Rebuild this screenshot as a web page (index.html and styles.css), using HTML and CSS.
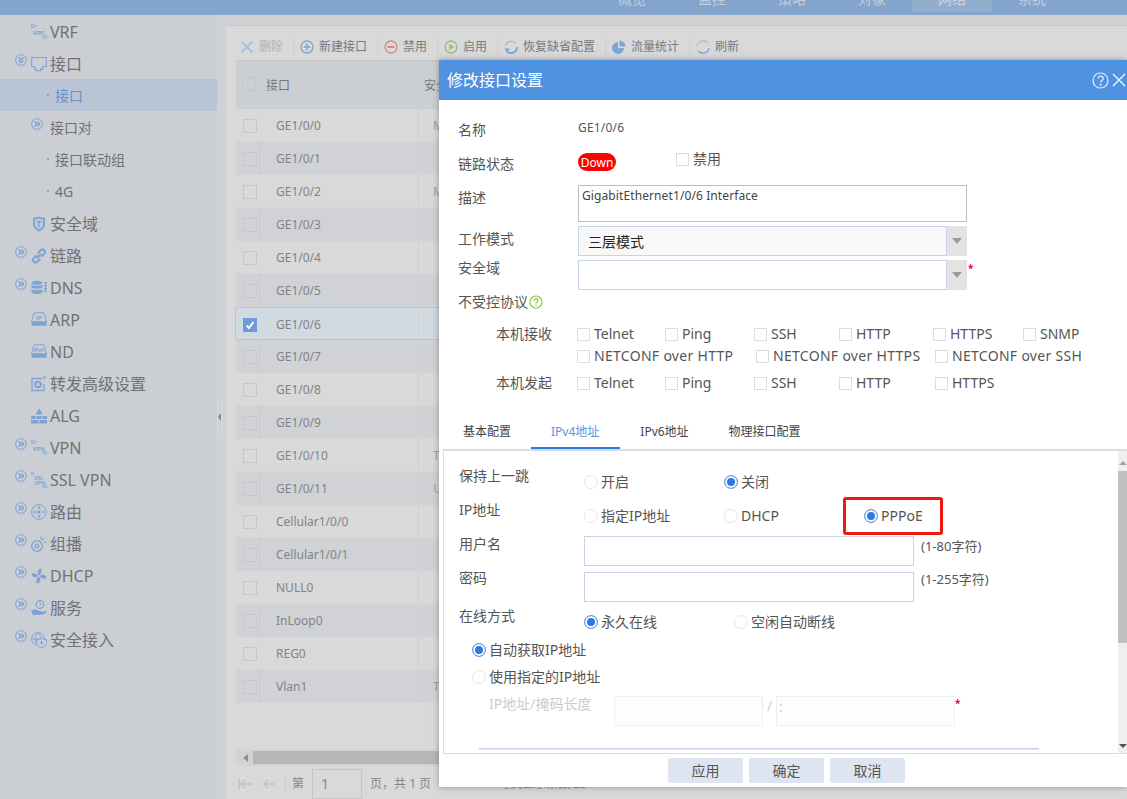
FILE: index.html
```html
<!DOCTYPE html>
<html lang="zh">
<head>
<meta charset="utf-8">
<title>修改接口设置</title>
<link rel="stylesheet" href="styles.css">
</head>
<body>
<svg class="defs" width="0" height="0">
  <symbol id="exp" viewBox="0 0 13 13"><circle cx="6.5" cy="6.5" r="5.8" fill="none" stroke="#82a7d8" stroke-width="1.1"/><path d="M3.800 4l2.500 2.500L3.800 9M6.800 4l2.500 2.500L6.800 9" fill="none" stroke="#6f98cf" stroke-width="1.200"/></symbol>
  <symbol id="col" viewBox="0 0 13 13"><circle cx="6.5" cy="6.5" r="5.8" fill="none" stroke="#82a7d8" stroke-width="1.1"/><path d="M4 3.800l2.500 2.500L9 3.800M4 6.800l2.500 2.500L9 6.800" fill="none" stroke="#6f98cf" stroke-width="1.200"/></symbol>
</svg>

<header class="top">
  <nav class="topnav">
    <div class="topitem"><span>概览</span></div>
    <div class="topitem"><span>监控</span></div>
    <div class="topitem"><span>策略</span></div>
    <div class="topitem"><span>对象</span></div>
    <div class="topitem active"><span>网络</span></div>
    <div class="topitem"><span>系统</span></div>
  </nav>
</header>

<div class="shell">
  <aside class="side">
    <div class="mi"><i class="ex"></i><svg class="ic" viewBox="0 0 16 16"><g fill="none" stroke="#8fb0da"><rect x="0.5" y="0.5" width="2.5" height="2.5"/><path d="M3 2h3M11 13h2"/><rect x="13" y="11.500" width="2.500" height="2.500"/></g><text x="1.500" y="10.500" class="ict">VRF</text></svg><span>VRF</span></div>
    <div class="mi"><svg class="ex" viewBox="0 0 13 13"><use href="#col"/></svg><svg class="ic" viewBox="0 0 16 16"><path d="M0.7 1.5h14.6v9h-3.6v2.6h-2v1.6H5.3v-1.6h-2v-2.6H0.7z" fill="none" stroke="#7fa3d3" stroke-width="1.1"/></svg><span>接口</span></div>
    <div class="mi sub sel"><b class="dot"></b><span>接口</span></div>
    <div class="mi sm"><i class="ex0"></i><svg class="ic" viewBox="0 0 13 13"><use href="#exp"/></svg><span>接口对</span></div>
    <div class="mi sub"><b class="dot"></b><span>接口联动组</span></div>
    <div class="mi sub"><b class="dot"></b><span>4G</span></div>
    <div class="mi"><i class="ex"></i><svg class="ic" viewBox="0 0 16 16"><path d="M8 0.5l6 1.500v7c0 3-3 5-6 6.500C5 14 2 12 2 9V2z" fill="#7fa3d3"/><path d="M8 2.400l4 1v5.600c0 2-2 3.400-4 4.500-2-1.100-4-2.500-4-4.500V3.400z" fill="#b9cbe3"/><path d="M5.500 5h5v1.300H8.700v5H7.300v-5H5.500z" fill="#7fa3d3"/></svg><span>安全域</span></div>
    <div class="mi"><svg class="ex" viewBox="0 0 13 13"><use href="#exp"/></svg><svg class="ic" viewBox="0 0 16 16"><g fill="none" stroke="#7fa3d3" stroke-width="2.100"><path d="M6.800 5.200l3-3a2.100 2.100 0 0 1 3.500 3.500l-3 3"/><path d="M9.200 10.800l-3 3a2.100 2.100 0 0 1-3.500-3.500l3-3"/><path d="M5.800 10.200l4.400-4.400"/></g></svg><span>链路</span></div>
    <div class="mi"><svg class="ex" viewBox="0 0 13 13"><use href="#exp"/></svg><svg class="ic" viewBox="0 0 16 16"><g fill="#7fa3d3"><ellipse cx="6" cy="2.800" rx="5.500" ry="2"/><path d="M0.500 4.500c1 1.600 10 1.600 11 0v3c-1 1.600-10 1.600-11 0zM0.500 9c1 1.600 10 1.600 11 0v3.200c-1 2.400-10 2.400-11 0z"/><path d="M13 2h3v1h-3zM13 5h3v1h-3zM13 8h3v1h-3zM13 11h3v1h-3zM14 2h1v10h-1z"/></g></svg><span>DNS</span></div>
    <div class="mi"><i class="ex"></i><svg class="ic" viewBox="0 0 16 16"><path d="M3 0.800h10l2.500 9H0.500z" fill="none" stroke="#7fa3d3"/><rect x="0.500" y="9.800" width="15" height="4" fill="#7fa3d3"/><text x="5" y="8" class="ict">IP</text></svg><span>ARP</span></div>
    <div class="mi"><i class="ex"></i><svg class="ic" viewBox="0 0 16 16"><path d="M3 0.800h10l2.500 9H0.500z" fill="none" stroke="#7fa3d3"/><rect x="0.500" y="9.800" width="15" height="4" fill="#7fa3d3"/><text x="2.500" y="8" class="ict tiny">IPv6</text></svg><span>ND</span></div>
    <div class="mi"><i class="ex"></i><svg class="ic" viewBox="0 0 16 16"><path d="M10 2.500H1v12h12V8" fill="none" stroke="#7fa3d3" stroke-width="1.300"/><path d="M9 4c1.500-2 3-2.500 5-2.500M12.500 0l2.500 1.500L12.500 3.500" fill="none" stroke="#7fa3d3"/><circle cx="7" cy="8.500" r="2.800" fill="none" stroke="#7fa3d3" stroke-width="2"/></svg><span>转发高级设置</span></div>
    <div class="mi"><i class="ex"></i><svg class="ic" viewBox="0 0 16 16"><path d="M8 0c1 2 3 3.500 3.500 6.500h-7C5 5 6 4.500 6 3c.8.400 1.500-1 2-3z" fill="#7fa3d3"/><path d="M0 8h16v3H0zM0 12h16v3.500H0z" fill="#7fa3d3"/><path d="M5 8v3M11 8v3M8 11v5" stroke="#cbced3"/></svg><span>ALG</span></div>
    <div class="mi"><svg class="ex" viewBox="0 0 13 13"><use href="#exp"/></svg><svg class="ic" viewBox="0 0 16 16"><g fill="none" stroke="#8fb0da"><rect x="0.500" y="0.500" width="2.500" height="2.500"/><path d="M3 2h3M11 13h2"/><rect x="13" y="11.500" width="2.500" height="2.500"/></g><text x="1.500" y="10.500" class="ict">VPN</text></svg><span>VPN</span></div>
    <div class="mi"><svg class="ex" viewBox="0 0 13 13"><use href="#exp"/></svg><svg class="ic" viewBox="0 0 16 16"><g fill="none" stroke="#8fb0da"><rect x="0.500" y="0.500" width="2" height="2"/><path d="M11 14.500h2"/><rect x="13" y="13" width="2.500" height="2.500"/></g><text x="3" y="8" class="ict tiny">SSL</text><text x="3.500" y="13" class="ict tiny">VPN</text></svg><span>SSL VPN</span></div>
    <div class="mi"><svg class="ex" viewBox="0 0 13 13"><use href="#exp"/></svg><svg class="ic" viewBox="0 0 16 16"><circle cx="8" cy="8" r="7.400" fill="none" stroke="#7fa3d3"/><path d="M8 2l2 2.500H6zM8 14l2-2.500H6zM2 8l2.500-2v4zM14 8l-2.500-2v4z" fill="#7fa3d3"/><circle cx="8" cy="8" r="1.800" fill="#7fa3d3"/></svg><span>路由</span></div>
    <div class="mi"><svg class="ex" viewBox="0 0 13 13"><use href="#exp"/></svg><svg class="ic" viewBox="0 0 16 16"><circle cx="6" cy="10" r="5.300" fill="none" stroke="#7fa3d3" stroke-width="1.300"/><circle cx="6" cy="10" r="2.500" fill="#7fa3d3"/><path d="M1.800 10h8.400M6 5.800v8.400" stroke="#cbced3" stroke-width=".7"/><path d="M10 0.500v3M13 2l-2 2.500M16 6h-3.500" stroke="#7fa3d3" stroke-width="1.200"/></svg><span>组播</span></div>
    <div class="mi"><svg class="ex" viewBox="0 0 13 13"><use href="#exp"/></svg><svg class="ic" viewBox="0 0 16 16"><path d="M7.500 7C6 5 6.500 1.500 9.500 0.500c2 1 1.500 4.500-1 6.500zM9 7.500c2-1.500 5.500-1 6.500 2-1 2-4.500 1.500-6.500-1zM8.500 9c1.500 2 1 5.500-2 6.500-2-1-1.500-4.500 1-6.500zM7 8.500C5 10 1.500 9.500 0.500 6.500c1-2 4.500-1.500 6.500 1z" fill="#7fa3d3"/></svg><span>DHCP</span></div>
    <div class="mi"><svg class="ex" viewBox="0 0 13 13"><use href="#exp"/></svg><svg class="ic" viewBox="0 0 16 16"><circle cx="9" cy="4.500" r="3.800" fill="none" stroke="#7fa3d3" stroke-width="1.200"/><path d="M9 2.500v2.200h1.800" fill="none" stroke="#7fa3d3"/><path d="M0 11.500c2-2.500 4.500-2.500 6.500-1l3 .2c1 .3.800 1.300 0 1.500l3.500-1c1.500-.5 2.500.3 3 .3-2 2.500-5 4-8 3.500-2-.5-3.500-.5-5.500 .5z" fill="#7fa3d3"/></svg><span>服务</span></div>
    <div class="mi"><svg class="ex" viewBox="0 0 13 13"><use href="#exp"/></svg><svg class="ic" viewBox="0 0 16 16"><circle cx="7" cy="7" r="6.400" fill="none" stroke="#7fa3d3"/><path d="M0.800 7h12M7 0.800c-4 3-4 9 0 12.400M7 0.800c4 3 4 9 0 12.400" fill="none" stroke="#7fa3d3" stroke-width=".8"/><path d="M10.500 6.500l5 1.300v3.700c0 2-2.500 3.500-5 4.500-2.500-1-5-2.500-5-4.500V7.800z" fill="#cbced3" stroke="#7fa3d3"/><path d="M8.500 10.800h4M10.500 8.800v4" stroke="#7fa3d3"/></svg><span>安全接入</span></div>
  </aside>
  <div class="gutter"></div>

  <main class="panel">
    <div class="toolbar">
      <div class="tool off"><svg viewBox="0 0 14 14"><path d="M1.500 1.500l11 11M12.500 1.500l-11 11" stroke="#a9c0dd" stroke-width="2" fill="none"/></svg><span>删除</span></div>
      <div class="tool"><svg viewBox="0 0 14 14"><circle cx="7" cy="7" r="6" fill="none" stroke="#7fa3d3" stroke-width="1.300"/><path d="M3.500 7h7M7 3.500v7" stroke="#7fa3d3" stroke-width="1.500"/></svg><span>新建接口</span></div>
      <div class="tool"><svg viewBox="0 0 14 14"><circle cx="7" cy="7" r="6" fill="none" stroke="#d98a88" stroke-width="1.300"/><path d="M3.500 7h7" stroke="#d98a88" stroke-width="2"/></svg><span>禁用</span></div>
      <div class="tool"><svg viewBox="0 0 14 14"><circle cx="7" cy="7" r="6" fill="none" stroke="#9bc06f" stroke-width="1.300"/><path d="M5.200 3.800v6.400L10 7z" fill="#9bc06f"/></svg><span>启用</span></div>
      <div class="tool"><svg viewBox="0 0 14 14"><path d="M1.500 5.500a5.800 5.800 0 0 1 10-2" fill="none" stroke="#a9c0dd" stroke-width="1.500"/><path d="M13 7a6 6 0 0 1-10.500 4" fill="none" stroke="#7fa3d3" stroke-width="1.800"/><path d="M0.500 8l2.500 4.500L6 9z" fill="#7fa3d3"/></svg><span>恢复缺省配置</span></div>
      <div class="tool"><svg viewBox="0 0 14 14"><path d="M6 2a6 6 0 1 0 6 6H6z" fill="#7fa3d3"/><path d="M7.500 0.500a6 6 0 0 1 6 6h-6z" fill="#7fa3d3"/></svg><span>流量统计</span></div>
      <div class="tool last"><svg viewBox="0 0 14 14"><path d="M1 6a6 6 0 0 1 10.500-3" fill="none" stroke="#a9c0dd" stroke-width="1.500"/><path d="M13 8a6 6 0 0 1-10.500 3" fill="none" stroke="#7fa3d3" stroke-width="1.500"/></svg><span>刷新</span></div>
    </div>
    <div class="table">
      <div class="thead"><i class="tcb hcb"></i><span class="th1">接口</span><span class="th2">安全域</span></div>
      <div class="tr"><div class="c0"><i class="tcb"></i></div><div class="c1">GE1/0/0</div><div class="c2">Management</div></div>
      <div class="tr st"><div class="c0"><i class="tcb"></i></div><div class="c1">GE1/0/1</div><div class="c2"></div></div>
      <div class="tr"><div class="c0"><i class="tcb"></i></div><div class="c1">GE1/0/2</div><div class="c2">Management</div></div>
      <div class="tr st"><div class="c0"><i class="tcb"></i></div><div class="c1">GE1/0/3</div><div class="c2"></div></div>
      <div class="tr"><div class="c0"><i class="tcb"></i></div><div class="c1">GE1/0/4</div><div class="c2"></div></div>
      <div class="tr st"><div class="c0"><i class="tcb"></i></div><div class="c1">GE1/0/5</div><div class="c2"></div></div>
      <div class="tr sel"><div class="c0"><svg class="chk" viewBox="0 0 14 14"><rect width="14" height="14" fill="#6f9bd8"/><path d="M3.500 7.500l2.500 2.500 4.500-6" fill="none" stroke="#fff" stroke-width="2"/></svg></div><div class="c1">GE1/0/6</div><div class="c2"></div></div>
      <div class="tr st"><div class="c0"><i class="tcb"></i></div><div class="c1">GE1/0/7</div><div class="c2"></div></div>
      <div class="tr"><div class="c0"><i class="tcb"></i></div><div class="c1">GE1/0/8</div><div class="c2"></div></div>
      <div class="tr st"><div class="c0"><i class="tcb"></i></div><div class="c1">GE1/0/9</div><div class="c2"></div></div>
      <div class="tr"><div class="c0"><i class="tcb"></i></div><div class="c1">GE1/0/10</div><div class="c2">Trust</div></div>
      <div class="tr st"><div class="c0"><i class="tcb"></i></div><div class="c1">GE1/0/11</div><div class="c2">Untrust</div></div>
      <div class="tr"><div class="c0"><i class="tcb"></i></div><div class="c1">Cellular1/0/0</div><div class="c2"></div></div>
      <div class="tr st"><div class="c0"><i class="tcb"></i></div><div class="c1">Cellular1/0/1</div><div class="c2"></div></div>
      <div class="tr"><div class="c0"><i class="tcb"></i></div><div class="c1">NULL0</div><div class="c2"></div></div>
      <div class="tr st"><div class="c0"><i class="tcb"></i></div><div class="c1">InLoop0</div><div class="c2"></div></div>
      <div class="tr"><div class="c0"><i class="tcb"></i></div><div class="c1">REG0</div><div class="c2"></div></div>
      <div class="tr st"><div class="c0"><i class="tcb"></i></div><div class="c1">Vlan1</div><div class="c2">Trust</div></div>
    </div>
    <div class="hscroll"><span class="harrow"></span><span class="hthumb"></span></div>
    <div class="pager">
      <svg class="pg" viewBox="0 0 15 12"><path d="M1 0.500v11M14 6H3M7 2L3 6l4 4" fill="none" stroke="#c0c2c5" stroke-width="1.500"/></svg>
      <svg class="pg pg2" viewBox="0 0 13 12"><path d="M13 6H2M6 2L2 6l4 4" fill="none" stroke="#c0c2c5" stroke-width="1.500"/></svg>
      <i class="pgsep"></i>
      <span>第</span>
      <span class="pginput">1</span>
      <span>页，共 1 页</span>
      <span class="pgsize">每页显示条数 25</span>
    </div>
  </main>
</div>

<i class="handle"></i>

<section class="modal">
  <div class="mhead">
    <h1>修改接口设置</h1>
    <svg class="mhelp" viewBox="0 0 17 17"><circle cx="8.500" cy="8.500" r="7.500" fill="none" stroke="#e4effb" stroke-width="1.200"/><path d="M6 6.500c0-3.200 5.200-3.200 5.200 0 0 2-2.600 2-2.600 4" fill="none" stroke="#e4effb" stroke-width="1.300"/><circle cx="8.600" cy="12.700" r="1" fill="#e4effb"/></svg>
    <svg class="mclose" viewBox="0 0 14 14"><path d="M1 1l12 12M13 1L1 13" stroke="#fff" stroke-width="1.100" fill="none"/></svg>
  </div>
  <div class="mbody">
    <div class="row r1"><label class="lab l3">名称</label><span class="val">GE1/0/6</span></div>
    <div class="row r2"><label class="lab l1">链路状态</label><span class="badge">Down</span><span class="opt optup"><i class="cb"></i>禁用</span></div>
    <div class="row r3"><label class="lab l3">描述</label><div class="area">GigabitEthernet1/0/6 Interface</div></div>
    <div class="row r4"><label class="lab l3">工作模式</label><div class="select fill"><span class="stext">三层模式</span><span class="sarrow"></span></div></div>
    <div class="row r5"><label class="lab">安全域</label><div class="select down"><span class="stext"></span><span class="sarrow"></span></div><b class="req reqs">*</b></div>
    <div class="row r6"><label class="lab auto">不受控协议</label><svg class="qm" viewBox="0 0 14 14"><circle cx="7" cy="7" r="6" fill="none" stroke="#8cc63f" stroke-width="1.200"/><path d="M5 5.500c0-2.500 4-2.500 4 0 0 1.500-2 1.500-2 3" fill="none" stroke="#8cc63f" stroke-width="1.200"/><circle cx="7" cy="10.300" r=".8" fill="#8cc63f"/></svg></div>
    <div class="prow h22"><span class="plab">本机接收</span>
      <span class="opt w88"><i class="cb"></i>Telnet</span><span class="opt w89"><i class="cb"></i>Ping</span><span class="opt w85"><i class="cb"></i>SSH</span><span class="opt w94"><i class="cb"></i>HTTP</span><span class="opt w90"><i class="cb"></i>HTTPS</span><span class="opt"><i class="cb"></i>SNMP</span>
    </div>
    <div class="prow h27 wide"><span class="plab"></span>
      <span class="opt w179"><i class="cb"></i>NETCONF over HTTP</span><span class="opt w179"><i class="cb"></i>NETCONF over HTTPS</span><span class="opt"><i class="cb"></i>NETCONF over SSH</span>
    </div>
    <div class="prow h47"><span class="plab">本机发起</span>
      <span class="opt w88"><i class="cb"></i>Telnet</span><span class="opt w89"><i class="cb"></i>Ping</span><span class="opt w85"><i class="cb"></i>SSH</span><span class="opt w96"><i class="cb"></i>HTTP</span><span class="opt"><i class="cb"></i>HTTPS</span>
    </div>
  </div>
  <div class="tabs">
    <span class="tab">基本配置</span><span class="tab on">IPv4地址</span><span class="tab">IPv6地址</span><span class="tab">物理接口配置</span>
  </div>
  <div class="tpanel">
    <div class="tcontent">
      <div class="frow h34"><label class="flab">保持上一跳</label><span class="ro w140"><i class="rd"></i>开启</span><span class="ro"><i class="rd on"></i>关闭</span></div>
      <div class="frow h34"><label class="flab">IP地址</label><span class="ro w140"><i class="rd"></i>指定IP地址</span><span class="ro w140"><i class="rd"></i>DHCP</span><span class="ro"><i class="rd on"></i>PPPoE</span></div>
      <div class="frow h34"><label class="flab">用户名</label><span class="inp mt2"></span><span class="hint mt2">(1-80字符)</span></div>
      <div class="frow h38"><label class="flab">密码</label><span class="inp mt4"></span><span class="hint mt1">(1-255字符)</span></div>
      <div class="frow h34"><label class="flab">在线方式</label><span class="ro w150"><i class="rd on"></i>永久在线</span><span class="ro"><i class="rd"></i>空闲自动断线</span></div>
      <div class="frow h27 ind13"><span class="ro nomt"><i class="rd on"></i>自动获取IP地址</span></div>
      <div class="frow h27 ind13"><span class="ro nomt"><i class="rd"></i>使用指定的IP地址</span></div>
      <div class="frow h54 ind30 dis"><label class="flab">IP地址/掩码长度</label><span class="inp dinp w149 mt2"></span><span class="slash">/</span><span class="inp dinp w179b mt2"><em>:</em></span><b class="req reqd">*</b></div>
      <div class="rule"></div>
      <div class="redbox"></div>
    </div>
    <div class="vscroll"><span class="up"></span><span class="vthumb"></span><span class="dn"></span></div>
  </div>
  <div class="mfoot"><button class="btn">应用</button><button class="btn">确定</button><button class="btn">取消</button></div>
</section>
</body>
</html>
```
FILE: styles.css
```css
*{box-sizing:border-box}
html,body{margin:0;padding:0}
body{width:1127px;height:799px;overflow:hidden;position:relative;background:#d0d1d4;color:#77797c;font:14px/20px "Noto Sans","Noto Sans CJK SC",sans-serif}
.defs{position:absolute}
.top{height:15px;background:#82a4cd;overflow:hidden}
.topnav{display:flex;justify-content:flex-end;padding-right:55px}
.topitem{width:80px;height:15px;text-align:center;color:#c3cedd;overflow:hidden;font-size:14px;line-height:14px}
.topitem span{display:block;margin-top:-8px}
.topitem.active{height:12px;background:#92aecf;color:#ccd5e1}
.shell{display:flex;height:784px}
.side{width:217px;flex:none;background:#cbced3;color:#707276;font-size:16px}
.mi{height:32px;display:flex;align-items:center;padding:2px 0 0 15px}
.ex,.ex0{width:12px;height:12px;flex:none;display:block;margin-top:-9px}
.ic{width:16px;height:16px;flex:none;margin:-1px 3px 0 4px}
.sm{font-size:14px}
.sm .ic{width:12px;height:12px;margin:-9px 7px 0 4px}
.sub{font-size:14px;padding-left:47px}
.sel{background:#b9c4d4;color:#6d8fc7}
.dot{width:2px;height:2px;background:#7fa3d3;margin-right:6px;margin-top:-3px}
.ict{font:bold 6px "Liberation Sans",sans-serif;fill:#7fa3d3}
.ict.tiny{font-size:5px}
.gutter{width:9px;flex:none;background:#d0d1d4}
.panel{flex:1;min-width:0;margin-top:10px;background:#d9d9d9;border-top:1px solid #c6c7ca;padding:9px 0 0 10px;display:flex;flex-direction:column;font-size:12px}
.toolbar{height:25px;flex:none;display:flex;align-items:flex-start;padding:2px 0 0 4px;color:#77797c}
.tool{display:flex;align-items:center;height:20px;gap:5px;padding-right:10px;margin-right:6px;border-right:1px solid #cfd0d2}
.tool svg{width:14px;height:14px;flex:none}
.tool.off{color:#b2b3b6}
.tool.last{border-right:0}
.table{height:689px;flex:none;border-top:1px solid #c4c6c9}
.thead{height:48px;background:#cbced2;display:flex;align-items:center;padding-left:6px}
.tcb{display:block;width:14px;height:14px;border:1px solid #c6c7c9;flex:none}
.hcb{margin-top:-3px}
.th1{margin-left:10px;width:158px;padding-top:2px}
.th2{padding-top:2px}
.tr{display:flex;height:33px;align-items:stretch;border-bottom:1px solid #d3d4d6;color:#828386}
.tr.st{background:#d0d2d6;border-bottom-color:#d0d2d6}
.tr.sel{background:#d1d9e1;border:1px solid #b4c6da;margin-left:-1px}
.c0{width:24px;flex:none;display:flex;align-items:center;padding:2px 0 0 7px}
.st .c0{border-right:1px solid #c8cacd}
.c1{width:159px;flex:none;padding:1px 0 0 16px;line-height:32px;border-right:1px solid #cfd0d2}
.c2{flex:1;padding:1px 0 0 14px;line-height:32px;color:#9aa0a8}
.chk{width:14px;height:14px;display:block}
.hscroll{height:17px;flex:none;background:#d2d3d5;display:flex;align-items:center}
.harrow{width:0;height:0;border:4px solid transparent;border-right:5px solid #8f9093;border-left:0;margin:0 5px 0 7px}
.hthumb{flex:1;height:13px;background:#b6b6b6}
.pager{height:33px;flex:none;display:flex;align-items:center;padding:3px 0 0 2px;color:#86878a;font-size:12px}
.pg{width:15px;height:12px;flex:none}
.pg2{width:13px;margin-left:9px}
.pgsep{width:1px;height:14px;background:#cbcccf;margin:0 6px 0 10px}
.pginput{width:50px;height:30px;margin:0 8px;border:1px solid #c2c5cb;padding-left:8px;line-height:28px;font-size:14px;flex:none}
.pgsize{margin-left:67px}
.handle{position:absolute;left:217px;top:400px;width:5px;height:36px;border:1px solid #d8d9dc;background:#cdd0d4}
.handle::after{content:"";position:absolute;left:0;top:12px;border:4px solid transparent;border-right:3px solid #85878b;border-left:0}
.modal{position:absolute;left:439px;top:60px;width:688px;height:727px;background:#fff;box-shadow:0 0 6px rgba(90,90,90,.55);color:#555;display:flex;flex-direction:column}
.mhead{height:40px;flex:none;background:#4f92e1;display:flex;align-items:center;padding-left:8px;color:#fff}
.mhead h1{margin:0;flex:1;font-size:16px;font-weight:400;line-height:38px}
.mhelp{width:17px;height:17px;margin-right:3px}
.mclose{width:14px;height:14px;margin-right:1px}
.mbody{height:320px;flex:none;padding:17px 0 0 19px}
.row{display:flex;align-items:flex-start}
.r1{height:36px}.r2{height:32px}.r3{height:41px}.r4{height:32px}.r5{height:34px}.r6{height:32px}
.lab{width:120px;flex:none;line-height:20px}
.lab.auto{width:auto}
.l1{margin-top:1px}.l3{margin-top:3px}
.val{font-size:12px;line-height:20px;margin-top:1px;letter-spacing:.2px}
.badge{width:38px;height:18px;border-radius:9px;background:#f00;color:#fff;font-size:12px;line-height:19px;text-align:center}
.opt{display:flex;align-items:center;line-height:20px;flex:none}
.optup{margin:-4px 0 0 60px}
.cb{display:block;width:13px;height:13px;border:1px solid #ddd;margin-right:4px;flex:none}
.wide{letter-spacing:.3px}
.area{width:389px;height:37px;border:1px solid #bdbdc6;font-size:12px;line-height:18px;padding:1px 3px;color:#444;letter-spacing:.1px}
.select{width:389px;height:30px;display:flex;color:#222;font-size:14px}
.select.down{margin-top:2px}
.stext{flex:1;border:1px solid #c7d4e6;padding-left:9px;line-height:29px}
.fill .stext{background:#f8f8f8}
.sarrow{width:20px;flex:none;background:#e3e3e3;position:relative}
.sarrow::after{content:"";position:absolute;left:5px;top:12px;border:5px solid transparent;border-top:6px solid #9c9c9c;border-bottom:0}
.req{color:#f0004a;font-size:10px;font-weight:700;line-height:14px}
.reqs{margin:3px 0 0 1px}
.qm{width:14px;height:14px;margin:3px 0 0 1px}
.prow{display:flex;align-items:flex-start}
.h22{height:22px}.h27{height:27px}.h47{height:47px}
.plab{width:81px;margin-left:38px;flex:none;font-size:14px;letter-spacing:0}
.w88{width:88px}.w89{width:89px}.w85{width:85px}.w94{width:94px}.w90{width:90px}.w96{width:96px}.w179{width:179px}
.tabs{height:29px;flex:none;display:flex;padding-left:4px;font-size:12px;color:#444}
.tab{padding:0 20px;line-height:23px;height:29px}
.tab.on{color:#5b93de;border-bottom:2px solid #2a7ae2;padding-right:21px}
.tpanel{height:305px;flex:none;margin-left:4px;border-top:2px solid #d5dcec;border-left:1px solid #d5dcec;border-bottom:1px solid #d5dcec;display:flex;position:relative;overflow:hidden}
.tcontent{flex:1;min-width:0;padding:15px 0 0 15px;position:relative}
.frow{display:flex;align-items:flex-start}
.h34{height:34px}.h38{height:38px}.h54{height:54px}
.flab{width:125px;flex:none;line-height:20px}
.ro{display:flex;align-items:center;margin-top:6px;flex:none;line-height:20px}
.nomt{margin-top:0}
.w140{width:140px}.w150{width:150px}
.rd{display:block;width:14px;height:14px;border:1px solid #e6e6e6;border-radius:50%;margin-right:3px;flex:none}
.rd.on{border-color:#6aa0e0;background:#2a7ae2;box-shadow:inset 0 0 0 2px #fff}
.inp{display:block;width:330px;height:30px;border:1px solid #c7d4e6;flex:none}
.mt1{margin-top:1px}.mt2{margin-top:2px}.mt4{margin-top:4px}
.hint{font-size:13px;margin-left:7px;line-height:20px}
.ind13{padding-left:13px}
.ind30{padding-left:30px}
.dis,.dis .flab{color:#ccc}
.dinp{border-color:#eeeff4;background:#fdfdfd;color:#ccc}
.w149{width:149px}.w179b{width:179px}
.dinp em{font-style:normal;padding-left:2px;line-height:20px}
.slash{width:13px;padding-left:4px;line-height:20px;margin-top:2px}
.reqd{margin-top:2px}
.rule{height:1px;background:#c5d3e5;margin:0 0 0 20px;width:560px;box-shadow:0 1px 0 #dfe6f0}
.redbox{position:absolute;left:399px;top:46px;width:100px;height:38px;border:3px solid #f0190f;border-radius:3px}
.vscroll{width:9px;flex:none;background:#efefef;display:flex;flex-direction:column;align-items:center;position:relative}
.vthumb{height:172px;width:9px;background:#c0c0c0;margin-top:6px}
.up{margin-top:10px;border:4px solid transparent;border-bottom:4px solid #a3a3a3;border-top:0}
.dn{position:absolute;bottom:5px;border:4px solid transparent;border-top:4px solid #505050;border-bottom:0}
.mfoot{height:33px;flex:none;padding:4px 0 0 229px;display:flex;gap:6px}
.btn{width:75px;height:25px;border:0;border-radius:2px;background:#dfe5f0;color:#555;font:14px/25px "Noto Sans","Noto Sans CJK SC",sans-serif;padding:0}
```
